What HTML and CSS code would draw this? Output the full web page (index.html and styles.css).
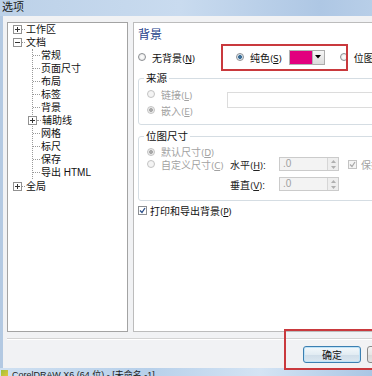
FILE: index.html
```html
<!DOCTYPE html>
<html lang="zh-CN">
<head>
    <meta charset="UTF-8">
    <title>选项</title>
    <link rel="stylesheet" href="styles.css">
</head>
<body>
<div class="window">
    <div class="titlebar">选项</div>
    <div class="frame">
        <div class="content">
            <!-- Arborescence -->
            <div class="tree">
                <div class="node">
                    <svg class="box" width="9" height="9"><rect x="0.5" y="0.5" width="8" height="8" fill="#fff" stroke="#919191"/><path d="M2 4.5h5M4.5 2v5" stroke="#333"/></svg>
                    <span class="tick"></span>工作区
                </div>
                <div class="node">
                    <svg class="box" width="9" height="9"><rect x="0.5" y="0.5" width="8" height="8" fill="#fff" stroke="#919191"/><path d="M2 4.5h5" stroke="#333"/></svg>
                    <span class="tick"></span>文档
                </div>
                <div class="children">
                    <div class="leaf"><span class="tick"></span>常规</div>
                    <div class="leaf"><span class="tick"></span>页面尺寸</div>
                    <div class="leaf"><span class="tick"></span>布局</div>
                    <div class="leaf"><span class="tick"></span>标签</div>
                    <div class="leaf"><span class="tick"></span>背景</div>
                    <div class="leaf">
                        <svg class="box inner" width="9" height="9"><rect x="0.5" y="0.5" width="8" height="8" fill="#fff" stroke="#919191"/><path d="M2 4.5h5M4.5 2v5" stroke="#333"/></svg>
                        <span class="tick short"></span>辅助线
                    </div>
                    <div class="leaf"><span class="tick"></span>网格</div>
                    <div class="leaf"><span class="tick"></span>标尺</div>
                    <div class="leaf"><span class="tick"></span>保存</div>
                    <div class="leaf"><span class="tick"></span>导出 HTML</div>
                </div>
                <div class="node">
                    <svg class="box" width="9" height="9"><rect x="0.5" y="0.5" width="8" height="8" fill="#fff" stroke="#919191"/><path d="M2 4.5h5M4.5 2v5" stroke="#333"/></svg>
                    <span class="tick"></span>全局
                </div>
            </div>

            <!-- Page Arrière-plan -->
            <div class="page">
                <h2 class="page-title">背景</h2>
                <div class="bg-row">
                    <label class="opt"><span class="radio"></span><span>无背景<span class="key">(<u>N</u>)</span></span></label>
                    <label class="opt solid"><span class="radio on"></span><span>纯色<span class="key">(<u>S</u>)</span></span></label>
                    <span class="swatch"></span>
                    <span class="drop"><svg width="6" height="4"><path d="M0 0h6L3 3.5z" fill="#000"/></svg></span>
                    <label class="opt bitmap"><span class="radio"></span><span>位图<span class="key">(<u>I</u>)</span></span></label>
                </div>
                <div class="mark"></div>

                <fieldset class="group source">
                    <legend>来源</legend>
                    <div class="src-body">
                        <div class="src-opts">
                            <label class="opt dim"><span class="radio off"></span><span>链接<span class="key">(<u>L</u>)</span></span></label>
                            <label class="opt dim"><span class="radio off on"></span><span>嵌入<span class="key">(<u>E</u>)</span></span></label>
                        </div>
                        <div class="src-field"></div>
                    </div>
                </fieldset>

                <fieldset class="group size">
                    <legend>位图尺寸</legend>
                    <div class="size-row first">
                        <label class="opt dim"><span class="radio off on"></span><span>默认尺寸<span class="key">(<u>D</u>)</span></span></label>
                    </div>
                    <div class="size-row">
                        <label class="opt dim size-opt"><span class="radio off"></span><span>自定义尺寸<span class="key">(<u>C</u>)</span></span></label>
                        <span class="size-label">水平<span class="key">(<u>H</u>)</span>:</span>
                        <div class="spin">
                            <span class="spin-val">.0</span>
                            <span class="spin-btns">
                                <svg width="5" height="3"><path d="M0 3h5L2.5 0z" fill="#b0b0b0"/></svg>
                                <svg width="5" height="3"><path d="M0 0h5L2.5 3z" fill="#b0b0b0"/></svg>
                            </span>
                        </div>
                        <label class="opt dim keep"><span class="check off"><svg width="7" height="7"><path d="M1 3.5l2 2L6 1" fill="none" stroke="#a8a8a8" stroke-width="1.2"/></svg></span>保持纵横比</label>
                    </div>
                    <div class="size-row last">
                        <span class="size-opt"></span>
                        <span class="size-label">垂直<span class="key">(<u>V</u>)</span>:</span>
                        <div class="spin">
                            <span class="spin-val">.0</span>
                            <span class="spin-btns">
                                <svg width="5" height="3"><path d="M0 3h5L2.5 0z" fill="#b0b0b0"/></svg>
                                <svg width="5" height="3"><path d="M0 0h5L2.5 3z" fill="#b0b0b0"/></svg>
                            </span>
                        </div>
                    </div>
                </fieldset>

                <label class="opt print"><span class="check"><svg width="7" height="7"><path d="M1 3.5l2 2L6 1" fill="none" stroke="#2a4f8a" stroke-width="1.3"/></svg></span><span>打印和导出背景<span class="key">(<u>P</u>)</span></span></label>
            </div>
        </div>

        <div class="footer">
            <button class="btn default">确定</button>
            <button class="btn">取消</button>
        </div>
    </div>
    <div class="mark-bottom"></div>
</div>
<div class="taskbar">
    <span class="app-icon"></span>CorelDRAW X6 (64 位) - [未命名 -1]
</div>
</body>
</html>
```

FILE: styles.css
```css
/* Base */
* {
    margin: 0;
    padding: 0;
    box-sizing: border-box;
}

body {
    width: 372px;
    height: 376px;
    overflow: hidden;
    font-family: "Liberation Sans", "Noto Sans CJK SC", sans-serif;
    font-size: 10px;
    color: #111;
    background: #c4d8ee;
    text-autospace: no-autospace;
}

/* Lettre de raccourci : (N), (S)... */
.key {
    font-family: "DejaVu Sans", sans-serif;
    font-size: 9px;
    letter-spacing: -0.3px;
}

.key u {
    text-decoration: underline;
    text-underline-offset: 1px;
}

/* Fenêtre */
.window {
    width: 400px;
    position: relative;
}

.titlebar {
    height: 16px;
    line-height: 14px;
    padding-left: 2px;
    font-size: 11px;
    color: #1a1a1a;
    background: linear-gradient(to right, #bcd1e8, #c9dbef 45%, #aec7e4 80%, #bdd2ea);
}

.frame {
    background: #f1f2f4;
    border-left: 3px solid #b3c9e2;
    padding: 6px 0 0 4px;
    height: 352px;
}

.content {
    display: flex;
    gap: 5px;
    height: 310px;
}

/* Arborescence */
.tree {
    width: 121px;
    flex: none;
    background: #fff;
    border: 1px solid #a3a3a3;
    line-height: 13px;
}

.node {
    display: flex;
    align-items: center;
    height: 13px;
    padding-left: 5px;
    white-space: nowrap;
}

.box {
    flex: none;
    display: block;
}

.tick {
    width: 3px;
    height: 0;
    border-top: 1px dotted #9a9a9a;
    margin-right: 1px;
}

.children {
    margin-left: 24px;
    border-left: 1px dotted #9a9a9a;
    margin-bottom: 1px;
}

.leaf {
    display: flex;
    align-items: center;
    height: 13px;
    white-space: nowrap;
}

.leaf .tick {
    width: 7px;
    margin-right: 1px;
}

.leaf .box.inner {
    margin-left: -5px;
}

.leaf .tick.short {
    width: 4px;
}

/* Page */
.page {
    flex: 1;
    background: #fff;
    border: 1px solid #bcbcbc;
    padding: 5px 0 0 4px;
    position: relative;
}

.page-title {
    font-size: 12px;
    font-weight: normal;
    line-height: 14px;
    color: #24408a;
}

.bg-row {
    display: flex;
    align-items: center;
    height: 16px;
    margin-top: 7px;
}

.opt {
    display: flex;
    align-items: center;
    gap: 6px;
    white-space: nowrap;
}

.opt.solid {
    margin-left: 41px;
}

.opt.bitmap {
    margin-left: 15px;
}

.opt.dim {
    color: #a2a2a2;
}

.radio {
    flex: none;
    width: 8px;
    height: 8px;
    border-radius: 50%;
    border: 1px solid #8c8f93;
    background: radial-gradient(circle, #ffffff, #e3e3e3);
}

.radio.on {
    background: radial-gradient(circle, #3a6d96 0 1.6px, #cfdeea 2.2px, #f5f5f5 3.5px);
}

.radio.off {
    border-color: #c3c3c3;
    background: #f4f4f4;
}

.radio.off.on {
    background: radial-gradient(circle, #a9a9a9 0 1.6px, #e8e8e8 2.2px, #f4f4f4 3.5px);
}

.swatch {
    width: 24px;
    height: 15px;
    margin-left: 7px;
    background: #e2007e;
    border: 1px solid #b3b3b3;
}

.drop {
    width: 12px;
    height: 15px;
    display: flex;
    align-items: center;
    justify-content: center;
    border: 1px solid #acacac;
    border-left: none;
    background: linear-gradient(#f6f6f6, #dcdcdc);
}

/* Cadre rouge d'annotation */
.mark {
    position: absolute;
    left: 87px;
    top: 21px;
    width: 127px;
    height: 27px;
    border: 2px solid #c9393d;
}

.mark-bottom {
    position: absolute;
    left: 284px;
    top: 329px;
    width: 110px;
    height: 41px;
    border: 2px solid #c9393d;
}

/* Groupes */
.group {
    border: 1px solid #d5dde3;
    border-radius: 3px;
    margin: 0;
    min-width: 0;
}

.group legend {
    padding: 0 2px;
    margin-left: -3px;
    line-height: 12px;
    font-size: 10.5px;
    color: #111;
}

.source {
    margin-top: 7px;
    padding: 2px 0 6px 8px;
}

.src-body {
    display: flex;
}

.src-opts {
    width: 80px;
}

.src-opts .opt {
    height: 16px;
}

.src-field {
    flex: 1;
    height: 16px;
    margin-top: 6px;
    border: 1px solid #dcdcdc;
    background: #fff;
}

.size {
    margin-top: 5px;
    padding: 4px 0 9px 8px;
}

.size-row {
    display: flex;
    align-items: center;
    height: 14px;
}

.size-row.first {
    height: 11px;
}

.size-row.last {
    margin-top: 6px;
}

.size-opt {
    width: 83px;
    flex: none;
}

.size-label {
    width: 49px;
    flex: none;
    color: #222;
}

.spin {
    width: 60px;
    height: 14px;
    display: flex;
    border: 1px solid #cbcbcb;
    background: #f3f3f3;
}

.spin-val {
    flex: 1;
    padding-left: 3px;
    line-height: 11px;
    color: #a0a0a0;
}

.spin-btns {
    width: 11px;
    display: flex;
    flex-direction: column;
    align-items: center;
    justify-content: space-around;
    border-left: 1px solid #d6d6d6;
    background: #eeeeee;
}

.spin-btns svg {
    display: block;
}

.keep {
    margin-left: 9px;
    gap: 4px;
}

.check {
    flex: none;
    width: 9px;
    height: 9px;
    display: flex;
    align-items: center;
    justify-content: center;
    border: 1px solid #8c8f93;
    background: #fff;
}

.check.off {
    border-color: #c3c3c3;
    background: #f4f4f4;
}

.print {
    margin-top: 2px;
    height: 14px;
    gap: 3px;
}

/* Boutons */
.footer {
    display: flex;
    gap: 6px;
    margin-top: 6px;
    padding: 7px 0 0 296px;
    border-top: 1px solid #d3d3d3;
    box-shadow: inset 0 1px 0 #ffffff;
}

.btn {
    width: 58px;
    height: 17px;
    flex: none;
    font-family: inherit;
    font-size: 10px;
    color: #111;
    border: 1px solid #3c7fb1;
    border-radius: 3px;
    background: linear-gradient(#f4f8fb, #e2ecf3 50%, #cfdde8 51%, #dce8f1);
    box-shadow: inset 0 0 0 1px #bfe3f7;
}

.btn:not(.default) {
    border-color: #8a8a8a;
    box-shadow: none;
    background: linear-gradient(#f3f3f3, #e6e6e6 50%, #d9d9d9 51%, #e3e3e3);
}

/* Barre des tâches */
.taskbar {
    height: 8px;
    display: flex;
    align-items: flex-start;
    gap: 4px;
    padding: 2px 0 0 1px;
    line-height: 10px;
    font-size: 9px;
    color: #222;
    overflow: hidden;
    background: linear-gradient(to right, #cfe0f1, #b7d0ea 40%, #d4e4f4 70%, #aac6e4);
}

.app-icon {
    width: 7px;
    height: 7px;
    flex: none;
    background: linear-gradient(135deg, #9ac23c, #e8c637);
}
```
